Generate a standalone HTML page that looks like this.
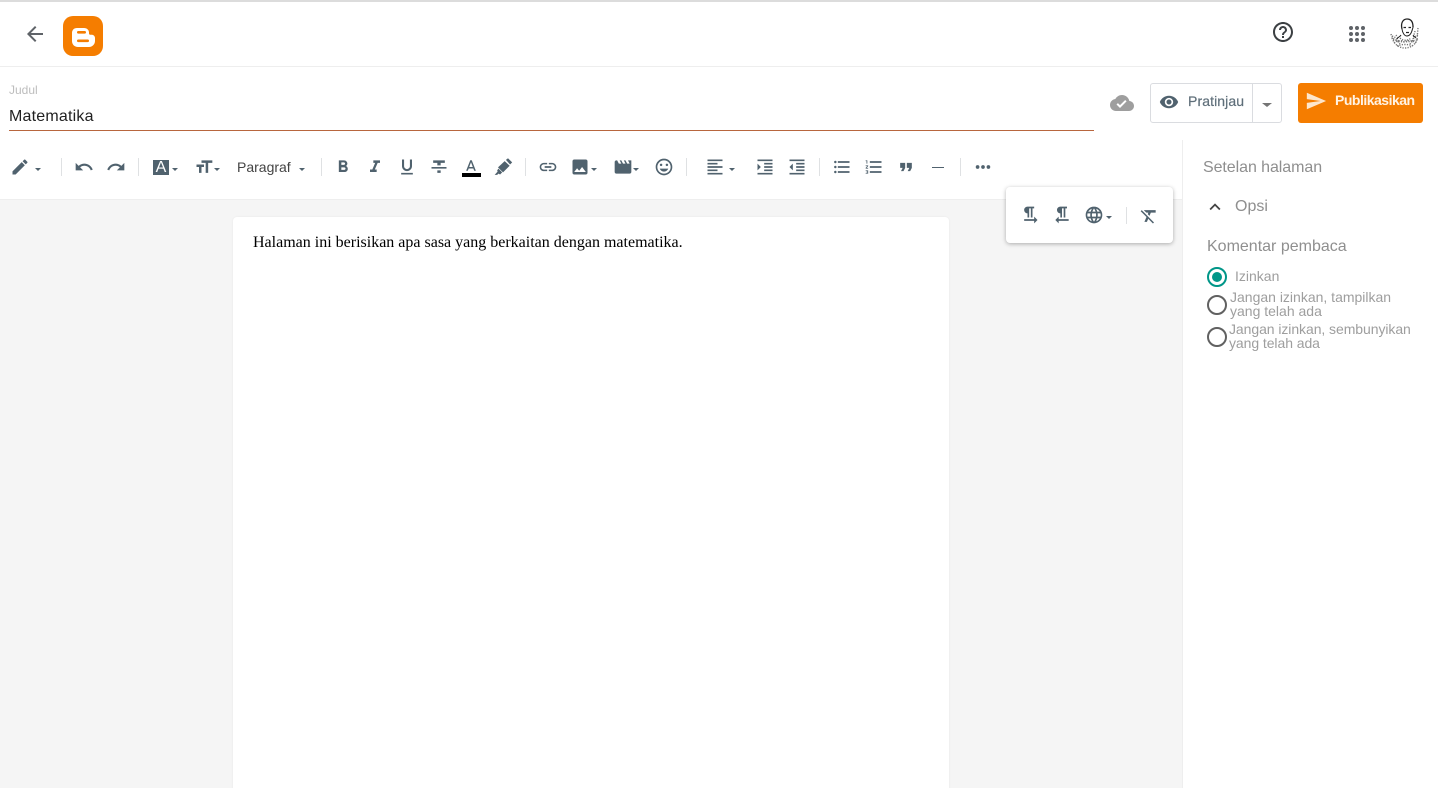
<!DOCTYPE html>
<html><head><meta charset="utf-8">
<style>
html,body{margin:0;padding:0;width:1438px;height:788px;overflow:hidden;background:#fff;font-family:"Liberation Sans",sans-serif}
#p{position:relative;width:1438px;height:788px;overflow:hidden}
.a{position:absolute}
.t{position:absolute;white-space:nowrap;line-height:16px}
svg.i{position:absolute;width:20px;height:20px;fill:#50626e}
.d{position:absolute;width:0;height:0;border-left:3.5px solid transparent;border-right:3.5px solid transparent;border-top:3.5px solid #50626e}
.s{position:absolute;top:158px;width:1px;height:18px;background:#dfe1e3}
</style></head><body><div id="p">
<div class="a" style="left:0;top:0;width:1438px;height:2px;background:#dcdcdc"></div>
<div class="a" style="left:0;top:66px;width:1438px;height:1px;background:#eeeeee"></div>

<svg class="i" viewBox="0 0 24 24" style="left:23px;top:22px;width:24px;height:24px;fill:#5f6368"><path d="M20 11H7.830l5.590-5.590L12 4l-8 8 8 8 1.410-1.410L7.830 13H20v-2z"/></svg>
<svg class="a" viewBox="0 0 40 40" style="left:63px;top:16px;width:40px;height:40px"><rect width="40" height="40" rx="10" fill="#f57d00"/><path d="M14 12h7c3 0 5 2 5 4.500v1c0 .8.5 1.200 1.200 1.200h1.300c2 0 3.500 1.300 3.500 3.300v3c0 3-2.500 6-6 6H15c-3.500 0-6-2.500-6-6V17c0-3 2-5 5-5z" fill="#fff"/><rect x="14" y="15" width="9" height="2.600" rx="1.300" fill="#f57d00"/><rect x="14" y="23.500" width="12" height="2.600" rx="1.300" fill="#f57d00"/></svg>

<svg class="i" viewBox="0 0 24 24" style="left:1271px;top:20px;width:24px;height:24px;fill:#3c4043"><path d="M11 18h2v-2h-2v2zm1-16C6.480 2 2 6.480 2 12s4.480 10 10 10 10-4.480 10-10S17.520 2 12 2zm0 18c-4.410 0-8-3.590-8-8s3.590-8 8-8 8 3.590 8 8-3.590 8-8 8zm0-14c-2.210 0-4 1.790-4 4h2c0-1.100.9-2 2-2s2 .9 2 2c0 2-3 1.750-3 5h2c0-2.250 3-2.500 3-5 0-2.210-1.790-4-4-4z"/></svg>
<svg class="a" viewBox="0 0 16 16" style="left:1349px;top:26px;width:16px;height:16px" fill="#5f6368"><circle cx="2" cy="2" r="2"/><circle cx="8" cy="2" r="2"/><circle cx="14" cy="2" r="2"/><circle cx="2" cy="8" r="2"/><circle cx="8" cy="8" r="2"/><circle cx="14" cy="8" r="2"/><circle cx="2" cy="14" r="2"/><circle cx="8" cy="14" r="2"/><circle cx="14" cy="14" r="2"/></svg>
<svg class="a" viewBox="0 0 32 32" style="left:1389px;top:17px;width:32px;height:32px"><g fill="none" stroke="#777" stroke-width="1.400" stroke-dasharray="1.200 1.300"><path d="M3 21c2 6 7 10 13 10s11-4 13-10"/><path d="M2 17c1 4 3 6 7 6"/><path d="M5 26c4-3 7-3 10-1 4-2 8-2 12 1"/><path d="M8 29c4-2 12-2 16 0"/><path d="M4 23c3 0 5 1 7 4"/><path d="M28 23c-3 0-5 1-7 4"/><path d="M7 18l3 4M26 14l-2 8M29 11l-1 11"/><path d="M11 21c3 3 8 3 11 0"/><path d="M3 19c3 1 5 2 7 6M29 18c-3 1-5 3-6 7"/><path d="M7 24c4 1 14 1 18 0"/></g><g fill="none" stroke="#222"><path d="M13 12c-1.500-6 1-10 5-10s6 3 6 8" stroke-width="1.300"/><path d="M13 12c.5 4 2.500 7 5 7s4.500-3 5.500-7c.3-1 .6-1.500.6-2.500" stroke-width="1"/><path d="M14.500 10.500h2.500M19.500 10.500h2.500" stroke-width="1.200"/><path d="M17 15.500h3" stroke-width="1.200"/><path d="M12 18c-1 2-3 2-4 4M24 18c1 2 2 2 3 3" stroke-width="1"/></g></svg>

<div class="t" style="left:9px;top:82px;font-size:12px;color:#bdbdbd">Judul</div>
<div class="t" style="left:9px;top:109px;font-size:16px;letter-spacing:.2px;color:#212121">Matematika</div>
<div class="a" style="left:9px;top:130px;width:1085px;height:1px;background:#b8663e"></div>

<svg class="i" viewBox="0 0 24 24" style="left:1110px;top:91px;width:24px;height:24px;fill:#9e9e9e"><path d="M19.350 10.040C18.670 6.590 15.640 4 12 4 9.110 4 6.600 5.640 5.350 8.040 2.340 8.360 0 10.910 0 14c0 3.310 2.690 6 6 6h13c2.760 0 5-2.240 5-5 0-2.640-2.050-4.780-4.650-4.960zM10 17l-3.500-3.500 1.410-1.410L10 14.170 15.180 9l1.410 1.410L10 17z"/></svg>

<div class="a" style="left:1150px;top:83px;width:130px;height:38px;border:1px solid #dadce0;border-radius:3px"></div>
<div class="a" style="left:1252px;top:84px;width:1px;height:38px;background:#dadce0"></div>
<svg class="i" viewBox="0 0 24 24" style="left:1159px;top:92px;width:20px;height:20px"><path d="M12 4.500C7 4.500 2.730 7.610 1 12c1.730 4.390 6 7.500 11 7.500s9.270-3.110 11-7.500c-1.730-4.390-6-7.500-11-7.500zM12 17c-2.760 0-5-2.240-5-5s2.240-5 5-5 5 2.240 5 5-2.240 5-5 5zm0-8c-1.660 0-3 1.340-3 3s1.340 3 3 3 3-1.340 3-3-1.340-3-3-3z"/></svg>
<div class="t" style="left:1188px;top:93px;font-size:14px;letter-spacing:.1px;color:#5f6f7a;-webkit-text-stroke:.2px #5f6f7a">Pratinjau</div>
<div class="d" style="left:1262px;top:103px;border-left-width:5px;border-right-width:5px;border-top-width:4px;border-top-color:#757575"></div>

<div class="a" style="left:1298px;top:83px;width:125px;height:40px;background:#f57d00;border-radius:3px"></div>
<svg class="i" viewBox="0 0 24 24" style="left:1305px;top:90px;width:22px;height:22px;fill:#fde6cc"><path d="M2.010 21L23 12 2.010 3 2 10l15 2-15 2z"/></svg>
<div class="t" style="left:1335px;top:92px;font-size:14px;font-weight:bold;letter-spacing:-.5px;color:#fff3e4">Publikasikan</div>

<div class="a" style="left:0;top:200px;width:1182px;height:588px;background:#f5f5f5"></div>
<div class="a" style="left:0;top:199px;width:1182px;height:1px;background:#eeeeee"></div>
<div class="a" style="left:1182px;top:140px;width:1px;height:648px;background:#eeeeee"></div>

<div class="a" style="left:233px;top:217px;width:716px;height:580px;background:#fff;border-radius:4px;box-shadow:0 0 2px rgba(0,0,0,.06)"></div>
<div class="t" style="left:253px;top:235px;font-family:'Liberation Serif',serif;font-size:16px;color:#000">Halaman ini berisikan apa sasa yang berkaitan dengan matematika.</div>

<div class="s" style="left:61px"></div><div class="s" style="left:138px"></div><div class="s" style="left:321px"></div><div class="s" style="left:525px"></div><div class="s" style="left:686px"></div><div class="s" style="left:819px"></div><div class="s" style="left:960px"></div>

<svg class="i" viewBox="0 0 24 24" style="left:10px;top:157px"><path d="M3 17.250V21h3.750L17.810 9.940l-3.750-3.750L3 17.250zM20.710 7.040c.39-.39.39-1.020 0-1.410l-2.340-2.340c-.39-.39-1.020-.39-1.410 0l-1.830 1.830 3.750 3.750 1.830-1.830z"/></svg>
<div class="d" style="left:35px;top:168px"></div>
<svg class="i" viewBox="0 0 24 24" style="left:74px;top:157px"><path d="M12.500 8c-2.650 0-5.050.99-6.900 2.600L2 7v9h9l-3.620-3.620c1.390-1.160 3.160-1.880 5.120-1.880 3.540 0 6.550 2.310 7.600 5.500l2.370-.78C21.080 11.030 17.150 8 12.500 8z"/></svg>
<svg class="i" viewBox="0 0 24 24" style="left:106px;top:157px"><path d="M18.400 10.600C16.550 8.990 14.150 8 11.500 8c-4.650 0-8.580 3.030-9.960 7.220L3.900 16c1.050-3.190 4.050-5.500 7.600-5.500 1.950 0 3.730.72 5.120 1.880L13 16h9V7l-3.600 3.600z"/></svg>

<div class="a" style="left:153px;top:160px;width:16px;height:15px;background:#50626e"></div>
<div class="t" style="left:153px;top:160px;width:16px;text-align:center;font-size:16px;line-height:15px;color:#fff">A</div>
<div class="d" style="left:172px;top:168px"></div>
<svg class="i" viewBox="0 0 24 24" style="left:194px;top:157px"><path d="M9 4v3h5v12h3V7h5V4H9zm-6 8h3v7h3v-7h3V9H3v3z"/></svg>
<div class="d" style="left:214px;top:168px"></div>
<div class="t" style="left:237px;top:159px;font-size:14px;color:#444">Paragraf</div>
<div class="d" style="left:299px;top:168px"></div>

<svg class="i" viewBox="0 0 24 24" style="left:333px;top:157px"><path d="M15.600 10.790c.97-.67 1.650-1.770 1.650-2.790 0-2.260-1.750-4-4-4H7v14h7.040c2.090 0 3.710-1.700 3.710-3.790 0-1.520-.86-2.820-2.150-3.420zM10 6.500h3c.83 0 1.500.67 1.500 1.500s-.67 1.500-1.500 1.500h-3v-3zm3.500 9H10v-3h3.500c.83 0 1.500.67 1.500 1.500s-.67 1.500-1.500 1.500z"/></svg>
<svg class="i" viewBox="0 0 24 24" style="left:365px;top:157px"><path d="M10 4v3h2.210l-3.420 8H6v3h8v-3h-2.210l3.420-8H18V4z"/></svg>
<svg class="i" viewBox="0 0 24 24" style="left:397px;top:157px"><path d="M12 17c3.310 0 6-2.690 6-6V3h-2.500v8c0 1.930-1.570 3.500-3.500 3.500S8.500 12.930 8.500 11V3H6v8c0 3.310 2.690 6 6 6zm-7 2v2h14v-2H5z"/></svg>
<svg class="i" viewBox="0 0 24 24" style="left:429px;top:157px"><path d="M10 19h4v-3h-4v3zM5 4v3h5v3h4V7h5V4H5zM3 14h18v-2H3v2z"/></svg>
<svg class="i" viewBox="0 0 24 24" style="left:462px;top:158px;width:18px;height:18px"><path d="M11 3L5.500 17h2.250l1.120-3h6.250l1.120 3h2.250L13 3h-2zm-1.380 9L12 5.670 14.380 12H9.620z"/></svg>
<div class="a" style="left:462px;top:173px;width:19px;height:4px;background:#000"></div>
<svg class="i" viewBox="0 0 24 24" style="left:493px;top:157px"><path d="M15.500 3.500L18 1.500l5 5-2.500 2.500zM14 5l6 5.500-8 8-6-6zM6.500 14l4.500 4.500-2.500 2.500-2-1-1.500 1.500H2l3.500-4-.5-1.500z"/></svg>

<svg class="i" viewBox="0 0 24 24" style="left:538px;top:157px"><path d="M3.900 12c0-1.710 1.390-3.100 3.100-3.100h4V7H7c-2.760 0-5 2.240-5 5s2.240 5 5 5h4v-1.900H7c-1.710 0-3.100-1.390-3.100-3.100zM8 13h8v-2H8v2zm9-6h-4v1.900h4c1.710 0 3.100 1.390 3.100 3.100s-1.390 3.100-3.100 3.100h-4V17h4c2.760 0 5-2.240 5-5s-2.240-5-5-5z"/></svg>
<svg class="i" viewBox="0 0 24 24" style="left:570px;top:157px"><path d="M21 19V5c0-1.100-.9-2-2-2H5c-1.100 0-2 .9-2 2v14c0 1.100.9 2 2 2h14c1.100 0 2-.9 2-2zM8.500 13.500l2.500 3.010L14.500 12l4.500 6H5l3.500-4.500z"/></svg>
<div class="d" style="left:591px;top:168px"></div>
<svg class="i" viewBox="0 0 24 24" style="left:613px;top:157px"><path d="M18 4l2 4h-3l-2-4h-2l2 4h-3l-2-4H8l2 4H7L5 4H4c-1.100 0-1.990.9-1.990 2L2 18c0 1.100.9 2 2 2h16c1.100 0 2-.9 2-2V4h-4z"/></svg>
<div class="d" style="left:633px;top:168px"></div>
<svg class="i" viewBox="0 0 24 24" style="left:654px;top:157px"><path d="M11.990 2C6.470 2 2 6.480 2 12s4.470 10 9.990 10C17.520 22 22 17.520 22 12S17.520 2 11.990 2zM12 20c-4.420 0-8-3.580-8-8s3.580-8 8-8 8 3.580 8 8-3.580 8-8 8zm3.500-9c.83 0 1.500-.67 1.500-1.500S16.330 8 15.500 8 14 8.670 14 9.500s.67 1.500 1.500 1.500zm-7 0c.83 0 1.500-.67 1.500-1.500S9.330 8 8.500 8 7 8.670 7 9.500 7.670 11 8.500 11zm3.500 6.500c2.330 0 4.310-1.460 5.110-3.500H6.890c.8 2.040 2.780 3.500 5.110 3.500z"/></svg>

<svg class="i" viewBox="0 0 24 24" style="left:705px;top:157px"><path d="M15 15H3v2h12v-2zm0-8H3v2h12V7zM3 13h18v-2H3v2zm0 8h18v-2H3v2zM3 3v2h18V3H3z"/></svg>
<div class="d" style="left:729px;top:168px"></div>
<svg class="i" viewBox="0 0 24 24" style="left:755px;top:157px"><path d="M3 21h18v-2H3v2zM3 8v8l4-4-4-4zm8 9h10v-2H11v2zM3 3v2h18V3H3zm8 6h10V7H11v2zm0 4h10v-2H11v2z"/></svg>
<svg class="i" viewBox="0 0 24 24" style="left:787px;top:157px"><path d="M11 17h10v-2H11v2zm-8-5l4 4V8l-4 4zm0 9h18v-2H3v2zM3 3v2h18V3H3zm8 6h10V7H11v2zm0 4h10v-2H11v2z"/></svg>
<svg class="i" viewBox="0 0 24 24" style="left:832px;top:157px"><path d="M4 10.500c-.83 0-1.500.67-1.500 1.500s.67 1.500 1.500 1.500 1.500-.67 1.500-1.500-.67-1.500-1.500-1.500zm0-6c-.83 0-1.500.67-1.500 1.500S3.170 7.500 4 7.500 5.500 6.830 5.500 6 4.830 4.500 4 4.500zm0 12c-.83 0-1.500.68-1.500 1.500s.68 1.500 1.500 1.500 1.500-.68 1.500-1.500-.67-1.500-1.500-1.500zM7 19h14v-2H7v2zm0-6h14v-2H7v2zm0-8v2h14V5H7z"/></svg>
<svg class="i" viewBox="0 0 24 24" style="left:864px;top:157px"><path d="M2 17h2v.5H3v1h1v.5H2v1h3v-4H2v1zm1-9h1V4H2v1h1v3zm-1 3h1.800L2 13.100v.9h3v-1H3.200L5 10.900V10H2v1zm5-6v2h14V5H7zm0 14h14v-2H7v2zm0-6h14v-2H7v2z"/></svg>
<svg class="i" viewBox="0 0 24 24" style="left:896px;top:157px"><path d="M6 17h3l2-4V7H5v6h3zm8 0h3l2-4V7h-6v6h3z"/></svg>
<div class="a" style="left:932px;top:167px;width:12px;height:1px;background:#50626e"></div>
<svg class="i" viewBox="0 0 24 24" style="left:973px;top:157px"><circle cx="5.500" cy="12" r="2.200"/><circle cx="12" cy="12" r="2.200"/><circle cx="18.500" cy="12" r="2.200"/></svg>

<div class="a" style="left:1006px;top:187px;width:167px;height:56px;background:#fff;border-radius:4px;box-shadow:0 1px 4px rgba(0,0,0,.3)"></div>
<svg class="i" viewBox="0 0 24 24" style="left:1020px;top:205px"><path d="M9 10v5h2V4h2v11h2V4h2V2H9C6.790 2 5 3.790 5 6s1.790 4 4 4zm12 8l-4-4v3H5v2h12v3l4-4z"/></svg>
<svg class="i" viewBox="0 0 24 24" style="left:1052px;top:205px"><path d="M10 10v5h2V4h2v11h2V4h2V2h-8C7.790 2 6 3.790 6 6s1.790 4 4 4zm-2 7v-3l-4 4 4 4v-3h12v-2H8z"/></svg>
<svg class="i" viewBox="0 0 24 24" style="left:1084px;top:205px"><path d="M11.990 2C6.470 2 2 6.480 2 12s4.470 10 9.990 10C17.520 22 22 17.520 22 12S17.520 2 11.990 2zm6.930 6h-2.950c-.32-1.250-.78-2.450-1.380-3.560 1.840.63 3.370 1.910 4.330 3.560zM12 4.040c.83 1.200 1.480 2.530 1.910 3.960h-3.820c.43-1.430 1.080-2.760 1.910-3.960zM4.260 14C4.100 13.360 4 12.690 4 12s.1-1.360.26-2h3.380c-.08.66-.14 1.320-.14 2 0 .68.06 1.340.14 2H4.260zm.82 2h2.950c.32 1.250.78 2.450 1.380 3.560-1.840-.63-3.370-1.900-4.330-3.560zm2.950-8H5.080c.96-1.660 2.490-2.930 4.330-3.560C8.810 5.550 8.350 6.750 8.030 8zM12 19.960c-.83-1.200-1.480-2.530-1.910-3.960h3.820c-.43 1.430-1.080 2.760-1.910 3.960zM14.340 14H9.660c-.09-.66-.16-1.320-.16-2 0-.68.07-1.350.16-2h4.680c.09.65.16 1.320.16 2 0 .68-.07 1.340-.16 2zm.25 5.560c.6-1.110 1.060-2.310 1.380-3.560h2.950c-.96 1.650-2.490 2.930-4.330 3.560zM16.360 14c.08-.66.14-1.320.14-2 0-.68-.06-1.340-.14-2h3.380c.16.64.26 1.310.26 2s-.1 1.360-.26 2h-3.380z"/></svg>
<div class="d" style="left:1106px;top:216px"></div>
<div class="a" style="left:1126px;top:207px;width:1px;height:17px;background:#dfe1e3"></div>
<svg class="i" viewBox="0 0 24 24" style="left:1139px;top:206px"><path d="M3.270 5L2 6.270l6.970 6.970L6.500 19h3l1.570-3.660L16.730 21 18 19.730 3.550 5.270 3.270 5zM6 5v.18L8.820 8h2.400l-.72 1.680 2.100 2.100L14.210 8H20V5H6z"/></svg>

<div class="t" style="left:1203px;top:160px;font-size:16px;letter-spacing:-.07px;color:#8f8f8f">Setelan halaman</div>
<svg class="i" viewBox="0 0 24 24" style="left:1204px;top:196px;width:22px;height:22px;fill:#444"><path d="M12 8l-6 6 1.410 1.410L12 10.830l4.590 4.580L18 14z"/></svg>
<div class="t" style="left:1235px;top:199px;font-size:16px;color:#8f8f8f">Opsi</div>
<div class="t" style="left:1207px;top:239px;font-size:16px;color:#8f8f8f">Komentar pembaca</div>

<div class="a" style="left:1207px;top:267px;width:16px;height:16px;border:2px solid #009688;border-radius:50%"></div>
<div class="a" style="left:1212px;top:272px;width:10px;height:10px;background:#009688;border-radius:50%"></div>
<div class="t" style="left:1235px;top:268px;font-size:14px;color:#9e9e9e">Izinkan</div>
<div class="a" style="left:1207px;top:295px;width:16px;height:16px;border:2px solid #616161;border-radius:50%"></div>
<div class="t" style="left:1230px;top:290px;font-size:14px;line-height:14px;color:#9e9e9e">Jangan izinkan, tampilkan<br>yang telah ada</div>
<div class="a" style="left:1207px;top:327px;width:16px;height:16px;border:2px solid #616161;border-radius:50%"></div>
<div class="t" style="left:1229px;top:322px;font-size:14px;line-height:14px;letter-spacing:-.07px;color:#9e9e9e">Jangan izinkan, sembunyikan<br>yang telah ada</div>
</div></body></html>
